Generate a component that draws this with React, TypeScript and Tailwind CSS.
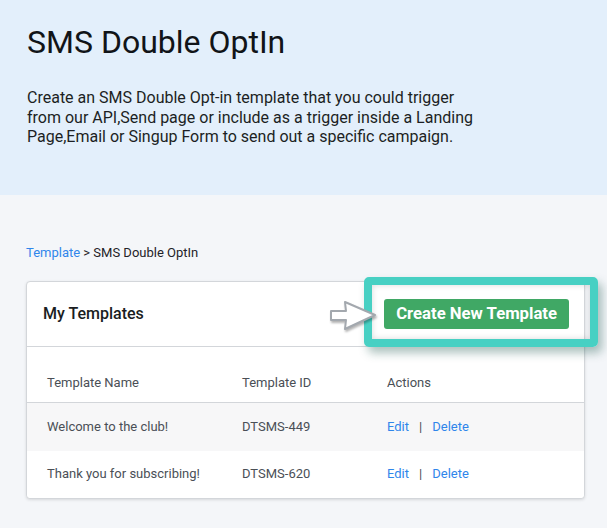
import { Fragment } from "react";

const rows = [
  { name: "Welcome to the club!", id: "DTSMS-449" },
  { name: "Thank you for subscribing!", id: "DTSMS-620" },
];

function PointerArrow() {
  return (
    <svg width="50" height="32" viewBox="0 0 50 32" className="drop-shadow-[1px_2px_1px_rgba(0,0,0,0.3)]">
      <polygon
        points="2,11 17,11 16,2 46,15 16,29 17,20 2,20"
        fill="#ffffff"
        stroke="#a3a8ae"
        strokeWidth="2"
        strokeLinejoin="round"
      />
    </svg>
  );
}

export default function App() {
  return (
    <div className="min-h-[528px] bg-[#f4f6f9] font-['Roboto',sans-serif]">
      <header className="bg-[#e3effb] px-[27px] pt-[23px] pb-[48px]">
        <h1 className="text-[32px] leading-[38px] text-[#111418]">SMS Double OptIn</h1>
        <p className="mt-[27px] text-[16px] leading-[19.5px] text-[#1c1f23]">
          Create an SMS Double Opt-in template that you could trigger
          <br />
          from our API,Send page or include as a trigger inside a Landing
          <br />
          Page,Email or Singup Form to send out a specific campaign.
        </p>
      </header>

      <main className="pl-[26px] pr-[22px] pt-[50px] pb-[31px]">
        <div className="text-[13px] leading-[16px] text-[#1f2328]">
          <a href="#" className="text-[#2f86eb]">Template</a> &gt; SMS Double OptIn
        </div>

        <div className="relative mt-[20px] rounded-[4px] border border-[#d3d6da] bg-white shadow-[0_1px_3px_rgba(0,0,0,0.12)]">
          <div className="flex h-[65px] items-center justify-between border-b border-[#d3d6da] pl-[16px] pr-[15px]">
            <h2 className="text-[16px] font-medium text-[#1a1d21]">My Templates</h2>
            <button className="h-[30px] rounded-[3px] bg-[#40a865] px-[12px] text-[16.7px] font-bold text-white">
              Create New Template
            </button>
          </div>

          <div className="grid grid-cols-[195px_145px_1fr] pl-[20px] text-[13px] text-[#4a4f56]">
            <div className="col-span-3 grid grid-cols-subgrid border-b border-[#d3d6da] -ml-[20px] pl-[20px] pt-[28px] pb-[11px] leading-[16px]">
              <div>Template Name</div>
              <div>Template ID</div>
              <div>Actions</div>
            </div>
            {rows.map((r, i) => (
              <Fragment key={r.id}>
                <div
                  className={`col-span-3 grid grid-cols-subgrid -ml-[20px] pl-[20px] items-center ${
                    i === 0 ? "h-[48px] bg-[#f7f7f8]" : "h-[47px] bg-white rounded-b-[4px]"
                  }`}
                >
                  <div>{r.name}</div>
                  <div>{r.id}</div>
                  <div>
                    <a href="#" className="text-[#2f86eb]">Edit</a>
                    <span className="mx-[10px] text-[#4a4f56]">|</span>
                    <a href="#" className="text-[#2f86eb]">Delete</a>
                  </div>
                </div>
              </Fragment>
            ))}
          </div>

          <div className="pointer-events-none absolute left-[337px] top-[-5px] h-[70px] w-[234px] rounded-[5px] border-[8px] border-[#47d0c3] shadow-[4px_6px_10px_rgba(20,80,70,0.35),inset_0_0_6px_rgba(0,0,0,0.15)]" />
          <div className="pointer-events-none absolute left-[302px] top-[18px]">
            <PointerArrow />
          </div>
        </div>
      </main>
    </div>
  );
}
